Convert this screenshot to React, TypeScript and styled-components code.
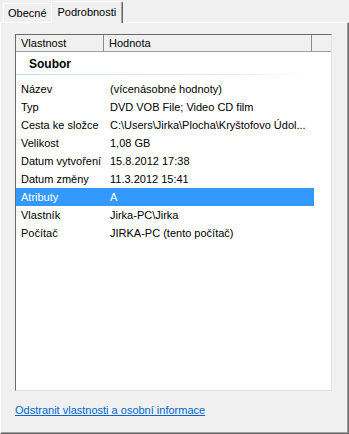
import React from "react";
import styled, { createGlobalStyle } from "styled-components";

const Global = createGlobalStyle`
  html, body { margin: 0; padding: 0; background: #f0f0f0; }
  body { font-family: "Liberation Sans", Arial, sans-serif; font-size: 11px; color: #000; }
  * { box-sizing: border-box; }
`;

const Window = styled.div`
  width: 349px;
  height: 434px;
  background: #f0f0f0;
  display: flex;
  flex-direction: column;
`;

const TabStrip = styled.div`
  display: flex;
  align-items: flex-end;
  height: 22px;
  padding-left: 3px;
  position: relative;
  z-index: 2;
`;

const Tab = styled.div<{ $active?: boolean }>`
  height: ${(p) => (p.$active ? "22px" : "19px")};
  padding: 0 ${(p) => (p.$active ? "6px" : "4px")} 0 ${(p) => (p.$active ? "6px" : "4px")};
  margin-left: ${(p) => (p.$active ? "-1px" : "0")};
  display: flex;
  align-items: center;
  padding-bottom: ${(p) => (p.$active ? "2px" : "0")};
  background: #f0f0f0;
  border-top: 1px solid #ffffff;
  border-left: 1px solid #ffffff;
  border-right: 1px solid ${(p) => (p.$active ? "#696969" : "#a0a0a0")};
  box-shadow: ${(p) => (p.$active ? "inset -1px 0 0 #a0a0a0" : "none")};
  border-radius: 2px 2px 0 0;
  margin-bottom: ${(p) => (p.$active ? "-1px" : "0")};
  white-space: nowrap;
  font-size: 11px;
`;

const Panel = styled.div`
  flex: 1;
  border-top: 1px solid #ffffff;
  border-left: 1px solid #ffffff;
  border-right: 1px solid #696969;
  border-bottom: 1px solid #696969;
  box-shadow: inset -1px -1px 0 #a0a0a0;
  padding: 11px 0 0 14px;
  display: flex;
  flex-direction: column;
`;

const ListView = styled.div`
  width: 317px;
  height: 357px;
  background: #ffffff;
  border-top: 1px solid #696969;
  border-left: 1px solid #696969;
  border-right: 1px solid #e3e3e3;
  border-bottom: 1px solid #e3e3e3;
  display: flex;
  flex-direction: column;
`;

const Header = styled.div`
  display: flex;
  height: 17px;
  background: #f0f0f0;
  border-bottom: 1px solid #a0a0a0;
`;

const HeaderCell = styled.div<{ $w?: number }>`
  ${(p) => (p.$w ? `width: ${p.$w}px;` : "flex: 1;")}
  padding-left: 5px;
  border-right: ${(p) => (p.$w ? "1px solid #8a8a8a" : "none")};
  display: flex;
  align-items: center;
  line-height: 14px;
`;

const Group = styled.div`
  height: 23px;
  padding-left: 13px;
  display: flex;
  align-items: center;
  font-weight: bold;
  font-size: 12px;
  position: relative;
  margin-bottom: 5px;
  &::after {
    content: "";
    position: absolute;
    left: 0;
    bottom: 0;
    width: 296px;
    height: 1px;
    background: linear-gradient(to right, #c9dcf2, #e2ecf8 70%, #ffffff);
  }
`;

const Row = styled.div<{ $selected?: boolean }>`
  display: flex;
  width: 298px;
  height: 18px;
  align-items: center;
  background: ${(p) => (p.$selected ? "#3399ff" : "transparent")};
  color: ${(p) => (p.$selected ? "#ffffff" : "#000000")};
`;

const Label = styled.div`
  width: 88px;
  padding-left: 5px;
  white-space: nowrap;
  overflow: hidden;
`;

const Value = styled.div`
  flex: 1;
  padding-left: 6px;
  white-space: nowrap;
  overflow: hidden;
`;

const Link = styled.a`
  margin-top: 12px;
  color: #0066cc;
  text-decoration: underline;
  line-height: 15px;
  cursor: pointer;
  align-self: flex-start;
`;

const rows: [string, string][] = [
  ["Název", "(vícenásobné hodnoty)"],
  ["Typ", "DVD VOB File; Video CD film"],
  ["Cesta ke složce", "C:\\Users\\Jirka\\Plocha\\Kryštofovo Údol..."],
  ["Velikost", "1,08 GB"],
  ["Datum vytvoření", "15.8.2012 17:38"],
  ["Datum změny", "11.3.2012 15:41"],
  ["Atributy", "A"],
  ["Vlastník", "Jirka-PC\\Jirka"],
  ["Počítač", "JIRKA-PC (tento počítač)"],
];

export default function App() {
  return (
    <Window>
      <Global />
      <TabStrip>
        <Tab>Obecné</Tab>
        <Tab $active>Podrobnosti</Tab>
      </TabStrip>
      <Panel>
        <ListView>
          <Header>
            <HeaderCell $w={88}>Vlastnost</HeaderCell>
            <HeaderCell $w={208}>Hodnota</HeaderCell>
            <HeaderCell />
          </Header>
          <Group>Soubor</Group>
          {rows.map(([k, v]) => (
            <Row key={k} $selected={k === "Atributy"}>
              <Label>{k}</Label>
              <Value>{v}</Value>
            </Row>
          ))}
        </ListView>
        <Link>Odstranit vlastnosti a osobní informace</Link>
      </Panel>
    </Window>
  );
}
